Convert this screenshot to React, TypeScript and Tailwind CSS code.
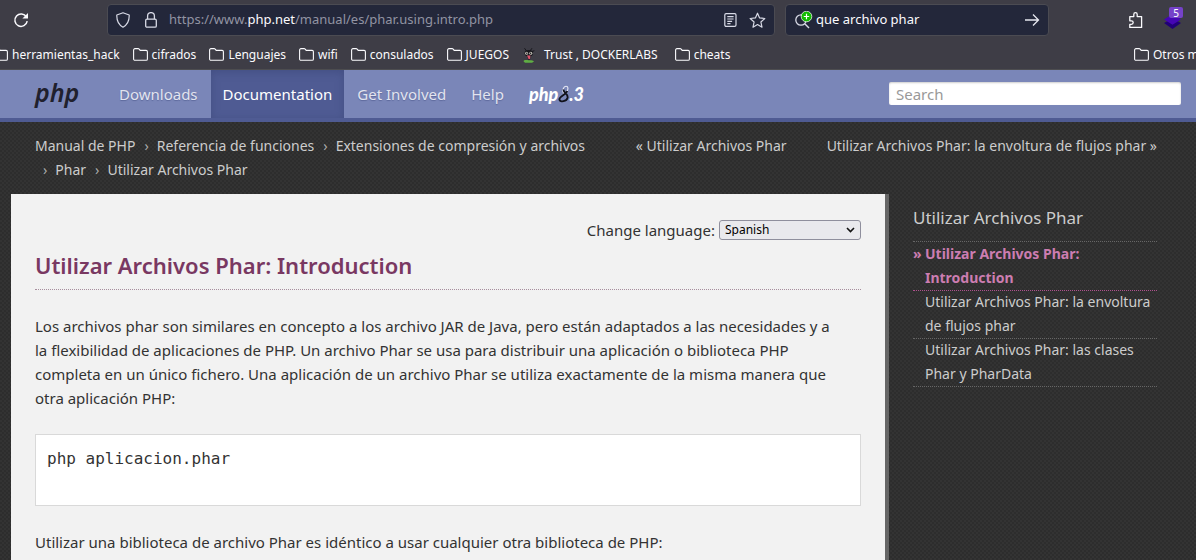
import type { ReactNode } from "react";

const noto = "font-['Noto_Sans',sans-serif]";

function Folder() {
  return (
    <svg width="15" height="13" viewBox="0 0 15 13" fill="none" stroke="#fbfbfe" strokeWidth="1.1" className="shrink-0" aria-hidden="true">
      <path d="M.6 10.9V2.1C.6 1.2 1.2.6 2 .6h3.1c.5 0 .8.2 1.1.5l1 1.3h5.9c.8 0 1.3.6 1.3 1.4v7.1c0 .8-.5 1.4-1.3 1.4H2c-.8 0-1.4-.6-1.4-1.4Z" />
    </svg>
  );
}

function Mascot() {
  return (
    <svg width="14" height="16" viewBox="0 0 14 16" className="shrink-0" aria-hidden="true">
      <path d="M4.500 4 2.500 1.200M8 4l2-2.800M10 4.500l2.400-.8" stroke="#17171c" strokeWidth="1" fill="none" />
      <ellipse cx="6.8" cy="6.2" rx="4.200" ry="3.2" fill="#17171c" />
      <path d="M5 8h4l-1 5H6Z" fill="#29252b" />
      <circle cx="4.600" cy="6.200" r="1.500" fill="#c9c5bb" />
      <circle cx="8.800" cy="6.200" r="1.500" fill="#c9c5bb" />
      <circle cx="4.800" cy="6.200" r=".7" fill="#17171c" />
      <circle cx="8.600" cy="6.200" r=".7" fill="#17171c" />
      <path d="M5 8.500h3.400l-.4 3.500H6.600Z" fill="#e0526b" />
      <path d="M1.500 14.200c1-1.800 2.500-.8 4-1.200 2 .8 4-.6 6.500 1.400l-2 1.300H3Z" fill="#5fae44" />
    </svg>
  );
}

function Bookmark({ children, icon }: { children: ReactNode; icon?: ReactNode }) {
  return (
    <a href="#" className="flex shrink-0 items-center gap-1 whitespace-nowrap">
      {icon ?? <Folder />}
      {children}
    </a>
  );
}

function Toolbar() {
  return (
    <div className="flex h-10 items-center pr-[15px] pl-3">
      <button aria-label="Recargar" className="flex w-[95px] shrink-0 items-center">
        <svg width="18" height="18" viewBox="0 0 18 18" fill="none" stroke="#fbfbfe" strokeWidth="1.5" aria-hidden="true">
          <path d="M14.4 6A6.2 6.2 0 1 0 15.2 10.2" />
          <path d="M16 2v5.6h-5.6Z" fill="#fbfbfe" stroke="none" />
        </svg>
      </button>
      <div className="flex h-8 min-w-0 flex-1 items-center rounded border border-[#4b4b52] bg-[#23273a] px-2 text-[#fbfbfe]">
        <svg width="14" height="16" viewBox="0 0 14 16" fill="none" stroke="#d8dae6" strokeWidth="1.2" strokeLinejoin="round" className="shrink-0" aria-hidden="true">
          <path d="M7 .8 13.2 3c.2 5.600-1.700 9.800-6.200 12.200C2.500 12.800.6 8.600.8 3Z" />
        </svg>
        <svg width="12" height="16" viewBox="0 0 12 16" fill="none" stroke="#d8dae6" strokeWidth="1.3" className="ml-[15px] shrink-0" aria-hidden="true">
          <path d="M2.600 7.200V4a3.400 3.400 0 0 1 6.800 0v3.200" />
          <rect x=".7" y="7.200" width="10.600" height="8" rx="1.300" />
        </svg>
        <span className="ml-3 flex-1 truncate text-[13px] text-[#9294a3]">
          https://www.<span className="text-[#fbfbfe]">php.net</span>/manual/es/phar.using.intro.php
        </span>
        <button aria-label="Vista de lectura">
          <svg width="13" height="14" viewBox="0 0 13 14" fill="none" stroke="#d8dae6" strokeWidth="1.200" aria-hidden="true">
            <rect x=".8" y=".6" width="11.200" height="12.800" rx="1.300" />
            <path d="M3.300 3.600h6.300M3.300 6h6.300M3.300 8.300h4.800M3.300 10.600h3.200" />
          </svg>
        </button>
        <button aria-label="Añadir marcador" className="ml-3">
          <svg width="17" height="17" viewBox="0 0 17 17" fill="none" stroke="#d8dae6" strokeWidth="1.200" strokeLinejoin="round" aria-hidden="true">
            <path d="m8.500 1.200 2.100 4.700 5.200.6-3.900 3.500 1.100 5.200-4.500-2.600L4 15.200 5.100 10 1.200 6.500l5.200-.6Z" />
          </svg>
        </button>
      </div>
      <div className="ml-[10px] flex h-8 w-[264px] shrink-0 items-center rounded border border-[#4b4b52] bg-[#23273a] px-2">
        <svg width="19" height="19" viewBox="0 0 19 19" fill="none" className="shrink-0" aria-hidden="true">
          <circle cx="7" cy="9" r="5.200" stroke="#d8dae6" strokeWidth="1.300" />
          <path d="m11 13 4 4" stroke="#d8dae6" strokeWidth="1.500" />
          <circle cx="12.500" cy="5.500" r="5.300" fill="#12bc00" stroke="#eef5ee" strokeWidth=".8" />
          <path d="M12.500 2.800v5.400M9.800 5.500h5.400" stroke="#fff" strokeWidth="1.200" />
        </svg>
        <input aria-label="Buscar" defaultValue="que archivo phar" className="ml-[3px] min-w-0 flex-1 bg-transparent text-[13px] text-[#fbfbfe] outline-none" />
        <button aria-label="Ir">
          <svg width="16" height="14" viewBox="0 0 16 14" fill="none" stroke="#e6e7ef" strokeWidth="1.300" aria-hidden="true">
            <path d="M1 7h13.500M9 1.500 14.500 7 9 12.500" />
          </svg>
        </button>
      </div>
      <button aria-label="Extensiones" className="ml-[79px] shrink-0">
        <svg width="16" height="18" viewBox="0 0 16 18" fill="none" stroke="#fbfbfe" strokeWidth="1.300" strokeLinejoin="round" aria-hidden="true">
          <path d="M1.800 7.200V5.600h4V3.400a1.700 1.700 0 0 1 3.400 0v2.200h4.400v10.800H1.800v-3h1.600a1.600 1.600 0 0 0 0-3.600H1.800Z" />
        </svg>
      </button>
      <button aria-label="Capas" className="relative ml-5 shrink-0">
        <svg width="17" height="18" viewBox="0 0 17 18" aria-hidden="true">
          <path d="M8.500 7.500 17 12l-8.500 6L0 12Z" fill="#210078" />
          <path d="m8.500 3 8.500 5.500-8.500 5.300L0 8.500Z" fill="#4506b4" />
        </svg>
        <span className="absolute -top-1 left-[5px] flex h-[11px] w-[14px] items-center justify-center rounded-xs bg-[#7542c9] text-[10px] leading-none text-white">5</span>
      </button>
    </div>
  );
}

function Bookmarks() {
  return (
    <nav aria-label="Marcadores" className="flex h-[30px] items-center justify-between overflow-hidden border-b border-[#4d4d50] text-xs text-[#fbfbfe]">
      <div className="-ml-[7px] flex items-center gap-[13px]">
        <Bookmark>herramientas_hack</Bookmark>
        <Bookmark>cifrados</Bookmark>
        <Bookmark>Lenguajes</Bookmark>
        <Bookmark>wifi</Bookmark>
        <Bookmark>consulados</Bookmark>
        <Bookmark>JUEGOS</Bookmark>
        <Bookmark icon={<Mascot />}>
          <span className="px-1">Trust , DOCKERLABS</span>
        </Bookmark>
        <Bookmark>cheats</Bookmark>
      </div>
      <div className="w-[62px] shrink-0 overflow-hidden">
        <Bookmark>Otros marcadores</Bookmark>
      </div>
    </nav>
  );
}

function SiteHeader() {
  const link = "flex items-center px-3 text-[#e2e4ef] [text-shadow:0_1px_1px_#5d699c]";
  return (
    <header className="flex h-[52px] items-stretch border-b-4 border-[#4f5b93] bg-[#7a86b8] pr-[15px] pl-[35px]">
      <a href="#" className="flex w-[72px] items-center pb-1 text-[25px] leading-none font-semibold text-[#20202d] italic">
        php
      </a>
      <nav aria-label="PHP" className="flex items-stretch gap-px text-[15px]">
        <a href="#" className={link}>Downloads</a>
        <a href="#" className="flex items-center bg-[#4f5b93] px-3 text-white shadow-[inset_0_2px_8px_#434f83]">Documentation</a>
        <a href="#" className={link}>Get Involved</a>
        <a href="#" className={link}>Help</a>
        <a href="#" aria-label="php 8.3" className="flex items-center px-3 font-[Lato,sans-serif] text-[18px] leading-none font-black text-white italic">
          php
          <svg width="11" height="18" viewBox="0 0 11 18" fill="none" aria-hidden="true">
            <path d="M5.500 8.500C4 5.500 5.500 1.200 8 1.200c2.400 0 2.600 3 .6 5.600" stroke="#e9ebf5" strokeWidth="1.100" />
            <path d="M5.400 4.500c.2 3.500 5 4.500 4.200 8.300-.8 3.600-7.600 5-8.200 1.700C1 11.500 8 10 9.300 6" stroke="#11121b" strokeWidth="1.800" />
          </svg>
          .3
        </a>
      </nav>
      <input type="search" aria-label="Search" placeholder="Search" className="my-3 ml-auto h-[23px] w-[292px] rounded-xs bg-white px-[7px] text-[15px] text-[#333] shadow-[inset_0_1px_2px_#0003] outline-none placeholder:text-[#999]" />
    </header>
  );
}

function Crumb({ children, first }: { children: ReactNode; first?: boolean }) {
  return (
    <li className="flex whitespace-nowrap">
      {!first && <span aria-hidden="true" className="mr-2 ml-2 text-[#aaa]">›</span>}
      <a href="#">{children}</a>
    </li>
  );
}

function Breadcrumbs() {
  return (
    <div className="flex pt-3 pr-[39px] pb-3 pl-[35px] text-sm leading-6 text-[#ccc]">
      <ol className="flex w-[560px] shrink-0 flex-wrap gap-x-px">
        <Crumb first>Manual de PHP</Crumb>
        <Crumb>Referencia de funciones</Crumb>
        <Crumb>Extensiones de compresión y archivos</Crumb>
        <Crumb>Phar</Crumb>
        <Crumb>Utilizar Archivos Phar</Crumb>
      </ol>
      <div className="flex flex-1 justify-end gap-10 whitespace-nowrap">
        <a href="#">« Utilizar Archivos Phar</a>
        <a href="#">Utilizar Archivos Phar: la envoltura de flujos phar »</a>
      </div>
    </div>
  );
}

function Article() {
  return (
    <main className="min-w-0 flex-1 border-r-4 border-[#666] bg-[#f2f2f2] px-6 pt-6 text-[15px] leading-6 text-[#333]">
      <div className="flex items-center justify-end gap-1">
        <label htmlFor="lang">Change language:</label>
        <div className="grid items-center">
          <select id="lang" defaultValue="es" className="col-start-1 row-start-1 h-5 w-[142px] appearance-none rounded-[3px] border border-[#8f8f9d] bg-[#e9e9ed] px-[5px] text-xs leading-none text-black">
            <option value="es">Spanish</option>
            <option value="en">English</option>
          </select>
          <svg width="9" height="6" viewBox="0 0 9 6" fill="none" stroke="#111" strokeWidth="1.600" className="pointer-events-none col-start-1 row-start-1 mr-[6px] justify-self-end" aria-hidden="true">
            <path d="m1 1 3.500 3.500L8 1" />
          </svg>
        </div>
      </div>
      <h1 className="mb-6 border-b border-dotted border-[#a78e9d] pt-[5px] pb-[6px] text-[22px] leading-9 font-semibold text-[#793862]">Utilizar Archivos Phar: Introduction</h1>
      <p className="mb-6 pr-5">
        Los archivos phar son similares en concepto a los archivo JAR de Java, pero están adaptados a las necesidades y a la flexibilidad de aplicaciones de PHP. Un archivo Phar se usa para distribuir una aplicación o biblioteca PHP completa en un único fichero. Una aplicación de un archivo Phar se utiliza exactamente de la misma manera que otra aplicación PHP:
      </p>
      <pre className="mb-6 min-h-[72px] border border-[#d9d9d9] bg-white px-[11px] py-3 font-['DejaVu_Sans_Mono',monospace] text-base leading-6">php aplicacion.phar</pre>
      <p>Utilizar una biblioteca de archivo Phar es idéntico a usar cualquier otra biblioteca de PHP:</p>
    </main>
  );
}

function Sidebar() {
  const item = "-mb-px border-b border-dotted";
  return (
    <aside className="w-[307px] shrink-0 pr-[39px] pl-6 text-sm leading-6 text-[#ccc]">
      <h2 className="border-b border-dotted border-[#666] pt-3 pb-[11px] text-[17px]">Utilizar Archivos Phar</h2>
      <ul>
        <li className={`${item} flex border-[#ae508d] font-bold text-[#cc7db1]`}>
          <span aria-hidden="true" className="w-3 shrink-0">»</span>
          <a href="#">Utilizar Archivos Phar: Introduction</a>
        </li>
        <li className={`${item} border-[#666] pl-3`}>
          <a href="#">Utilizar Archivos Phar: la envoltura de flujos phar</a>
        </li>
        <li className={`${item} border-[#666] pl-3`}>
          <a href="#">Utilizar Archivos Phar: las clases Phar y PharData</a>
        </li>
      </ul>
    </aside>
  );
}

export default function App() {
  return (
    <div className={`${noto} flex min-h-screen flex-col bg-[#2f2f2f] bg-[repeating-conic-gradient(#2d2d2d_0_25%,#333_0_50%)] bg-[length:4px_4px]`}>
      <div className="bg-[#3e3d46]">
        <Toolbar />
        <Bookmarks />
      </div>
      <SiteHeader />
      <Breadcrumbs />
      <div className="flex flex-1 pl-[11px]">
        <Article />
        <Sidebar />
      </div>
    </div>
  );
}
